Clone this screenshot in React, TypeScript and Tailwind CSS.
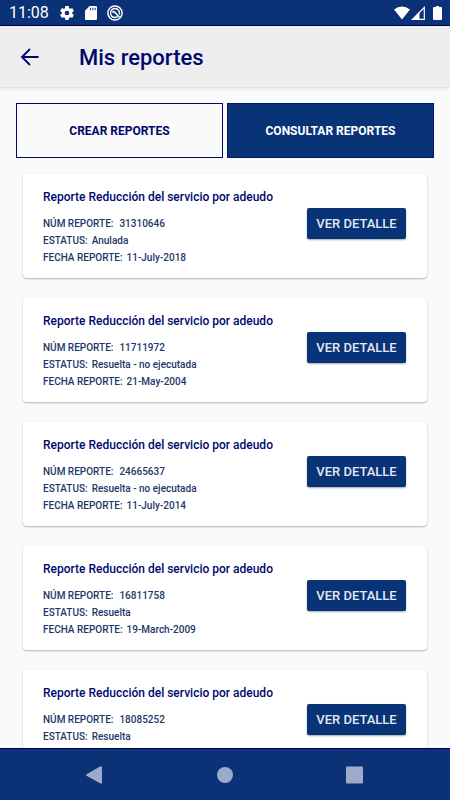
import React from "react";

type Report = {
  id: string;
  status: string;
  date?: string;
};

const reports: Report[] = [
  { id: "31310646", status: "Anulada", date: "11-July-2018" },
  { id: "11711972", status: "Resuelta - no ejecutada", date: "21-May-2004" },
  { id: "24665637", status: "Resuelta - no ejecutada", date: "11-July-2014" },
  { id: "16811758", status: "Resuelta", date: "19-March-2009" },
  { id: "18085252", status: "Resuelta" },
];

function GearIcon() {
  return (
    <svg viewBox="1 1 22 22" className="size-4" fill="currentColor" aria-hidden="true">
      <path d="M19.14 12.94c.04-.3.06-.61.06-.94 0-.32-.02-.64-.07-.94l2.03-1.58a.49.49 0 0 0 .12-.61l-1.92-3.32a.488.488 0 0 0-.59-.22l-2.39.96c-.5-.38-1.03-.7-1.62-.94l-.36-2.54a.484.484 0 0 0-.48-.41h-3.84c-.24 0-.43.17-.47.41l-.36 2.54c-.59.24-1.13.57-1.62.94l-2.39-.96c-.22-.08-.47 0-.59.22L2.74 8.87c-.12.21-.08.47.12.61l2.03 1.58c-.05.3-.09.63-.09.94s.02.64.07.94l-2.03 1.58a.49.49 0 0 0-.12.61l1.92 3.32c.12.22.37.29.59.22l2.39-.96c.5.38 1.03.7 1.62.94l.36 2.54c.05.24.24.41.48.41h3.84c.24 0 .44-.17.47-.41l.36-2.54c.59-.24 1.13-.56 1.62-.94l2.39.96c.22.08.47 0 .59-.22l1.92-3.32c.12-.22.07-.47-.12-.61l-2.01-1.58zM12 15.2A3.2 3.2 0 1 1 12 8.8a3.2 3.2 0 0 1 0 6.400z" />
    </svg>
  );
}

function SdCardIcon() {
  return (
    <svg viewBox="0 0 24 24" className="size-4" fill="currentColor" aria-hidden="true">
      <path d="M19 1.500H10L3 8.500V20.500C3 21.600 3.900 22.500 5 22.500H19C20.100 22.500 21 21.600 21 20.500V3.500C21 2.400 20.100 1.500 19 1.500zM12 8h-1.500V4h1.500v4zm3.500 0h-1.500V4h1.500v4zm3.500 0h-1.500V4h1.500v4z" />
    </svg>
  );
}

function CircledAIcon() {
  return (
    <svg viewBox="0 0 16 16" className="size-4" fill="none" stroke="currentColor" aria-hidden="true">
      <circle cx="8" cy="8" r="7.100" strokeWidth="1.500" />
      <path d="M10.600 11.700A4.500 4.500 0 1 1 12.300 9.400" strokeWidth="1.500" />
      <path d="M5.500 7.500Q6.500 6 7.500 7L12.500 12.300" strokeWidth="1.600" />
    </svg>
  );
}

function StatusBar() {
  return (
    <div className="flex h-[26px] shrink-0 items-center justify-between border-b border-[#00005f] bg-[#0b3177] pl-[9px] pr-2 text-white">
      <div className="flex items-center">
        <span className="w-[50px] text-base leading-6">11:08</span>
        <div className="flex items-center gap-2">
          <GearIcon />
          <SdCardIcon />
          <CircledAIcon />
        </div>
      </div>
      <div className="flex items-center">
        <svg viewBox="0 0 16 14" className="h-[14px] w-4" fill="currentColor" aria-hidden="true">
          <path d="M0 3.500Q8-2.500 16 3.500L8 13.500Z" />
        </svg>
        <svg viewBox="0 0 16 14" className="h-[14px] w-4" aria-hidden="true">
          <path d="M2.500 13.300H14.300V1.500Z" fill="none" stroke="currentColor" strokeWidth="1.200" />
          <path d="M2 13.500L9.500 6V13.500Z" fill="currentColor" />
        </svg>
        <svg viewBox="0 0 9 14" className="ml-[7px] h-[14px] w-[9px]" fill="currentColor" aria-hidden="true">
          <path d="M3 0H6V1H8Q9 1 9 2V13Q9 14 8 14H1Q0 14 0 13V2Q0 1 1 1H3Z" />
        </svg>
      </div>
    </div>
  );
}

function ReportCard({ report }: { report: Report }) {
  return (
    <li className="flex h-[104px] shrink-0 items-start justify-between rounded bg-white pl-5 pr-[21px] shadow-[0_1px_2px_rgba(0,0,0,0.28)]">
      <div className="pt-[13px]">
        <h2 className="text-xs leading-5 font-medium text-[#00086e]">Reporte Reducción del servicio por adeudo</h2>
        <dl className="mt-2 text-[10px] leading-[17px] font-medium text-[#1c3768]">
          <div className="flex gap-[6px]">
            <dt>NÚM REPORTE:</dt>
            <dd>{report.id}</dd>
          </div>
          <div className="flex gap-1">
            <dt>ESTATUS:</dt>
            <dd>{report.status}</dd>
          </div>
          {report.date && (
            <div className="flex gap-1">
              <dt>FECHA REPORTE:</dt>
              <dd>{report.date}</dd>
            </div>
          )}
        </dl>
      </div>
      <button
        type="button"
        className="mt-[34px] h-[31px] w-[99px] rounded-xs bg-[#083377] text-[13px] font-medium text-[#e4e8f1] shadow-[0_1px_2px_rgba(0,0,0,0.35)]"
      >
        VER DETALLE
      </button>
    </li>
  );
}

function NavigationBar() {
  return (
    <nav className="z-10 flex h-[52px] shrink-0 items-center justify-center gap-[113px] border-t border-[#00005f] bg-[#0b3177] text-[#9dabc9]">
      <button type="button" aria-label="Atrás">
        <svg viewBox="0 0 18 18" className="size-[18px]" fill="currentColor" aria-hidden="true">
          <path d="M0.500 8.200L14.500 0.300Q16 0 16 1.500V16.500Q16 18 14.500 17.500L0.500 9.800Q-0.500 9 0.500 8.200Z" />
        </svg>
      </button>
      <button type="button" aria-label="Inicio">
        <svg viewBox="0 0 16 16" className="size-4" fill="currentColor" aria-hidden="true">
          <circle cx="8" cy="8" r="8" />
        </svg>
      </button>
      <button type="button" aria-label="Recientes">
        <svg viewBox="0 0 18 18" className="size-[18px]" fill="currentColor" aria-hidden="true">
          <rect x="0" y="0.500" width="17" height="17" rx="1" />
        </svg>
      </button>
    </nav>
  );
}

export default function App() {
  return (
    <div className="flex h-screen flex-col overflow-hidden bg-[#fafafa] font-['Roboto',sans-serif]">
      <StatusBar />
      <header className="flex h-[62px] shrink-0 items-center border-b border-[#e2e2e2] bg-[#eeeeee] pl-5 text-[#00086e] shadow-[0_1px_3px_rgba(0,0,0,0.08)]">
        <button type="button" aria-label="Volver" className="mr-10">
          <svg viewBox="0 0 19 18" className="h-[18px] w-[19px]" fill="none" stroke="currentColor" strokeWidth="1.900" aria-hidden="true">
            <path d="M18.500 9H2.500M10 1L2 9L10 17" />
          </svg>
        </button>
        <h1 className="pt-0.5 text-[22px] leading-8 font-medium">Mis reportes</h1>
      </header>
      <main className="flex min-h-0 flex-1 flex-col overflow-hidden px-4 pt-[15px]">
        <div className="grid shrink-0 grid-cols-2 gap-1 text-xs font-bold">
          <button type="button" className="h-[55px] border border-[#00086e] text-[#00086e]">
            CREAR REPORTES
          </button>
          <button type="button" className="h-[55px] border border-[#001668] bg-[#083377] text-white">
            CONSULTAR REPORTES
          </button>
        </div>
        <ul className="mt-4 flex flex-col gap-5 px-[7px]">
          {reports.map((report) => (
            <ReportCard key={report.id} report={report} />
          ))}
        </ul>
      </main>
      <NavigationBar />
    </div>
  );
}
